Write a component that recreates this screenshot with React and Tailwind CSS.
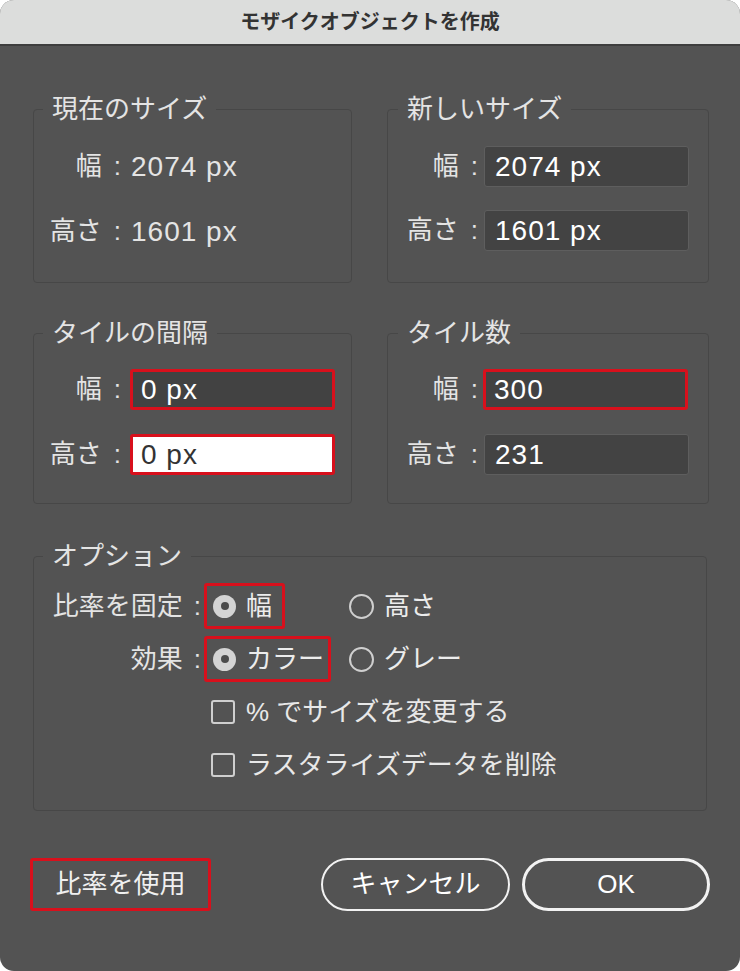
import React from "react";

const FONT = { fontFamily: '"Liberation Sans", "Noto Sans CJK JP", sans-serif' };

function Field({ value, red, white }) {
  const base = "flex items-center h-[41px] rounded-[3px] text-[28px] leading-none tracking-[1px] w-[205px]";
  const cls = red
    ? white
      ? "border-[3px] border-[#d8101c] bg-white text-[#333333] pl-[8px]"
      : "border-[3px] border-[#d8101c] bg-[#424242] text-white pl-[8px]"
    : "border border-[#5e5e5e] bg-[#434343] text-white pl-[10px]";
  return <div className={`${base} ${cls}`}>{value}</div>;
}

function Group({ title, children, className = "" }) {
  return (
    <fieldset className={`border border-[#474747] rounded-[4px] ${className}`}>
      <legend className="-ml-[10px] px-[9px] text-[26px] leading-[30px] text-[#e4e4e4]">{title}</legend>
      {children}
    </fieldset>
  );
}

function Row({ label, labelW, gap, children }) {
  return (
    <div className="flex items-center h-[41px]">
      <span className={`${labelW} flex justify-end items-center text-[26px] text-[#e4e4e4] whitespace-nowrap`}>
        <span>{label}</span>
        <span className="ml-[12px]">:</span>
      </span>
      <div className={gap}>{children}</div>
    </div>
  );
}

function Radio({ checked }) {
  return checked ? (
    <span className="flex items-center justify-center w-[23px] h-[23px] rounded-full bg-[#d4d4d4]">
      <span className="w-[8px] h-[8px] rounded-full bg-[#4c4c4c]" />
    </span>
  ) : (
    <span className="w-[25px] h-[25px] rounded-full border-2 border-[#cfcfcf]" />
  );
}

function Check({ label }) {
  return (
    <div className="flex items-center h-[46px] pl-[158px]">
      <span className="w-[24px] h-[24px] rounded-[3px] border-2 border-[#cfcfcf]" />
      <span className="ml-[11px] text-[26px] text-[#e8e8e8]">{label}</span>
    </div>
  );
}

function OptLabel({ text }) {
  return (
    <span className="w-[148px] flex justify-end items-center text-[26px] text-[#e4e4e4] whitespace-nowrap">
      <span>{text}</span>
      <span className="ml-[11px]">:</span>
    </span>
  );
}

export default function App() {
  return (
    <div className="w-[740px] h-[971px] bg-white" style={FONT}>
      <div className="w-[740px] h-[971px] rounded-[14px] overflow-hidden bg-[#535353] flex flex-col">
        <div className="h-[46px] shrink-0 bg-[#dcdddc] border-b-2 border-[#3e3e3e] flex items-center justify-center">
          <span className="text-[20px] font-bold text-[#333333]">モザイクオブジェクトを作成</span>
        </div>

        <div className="px-[33px] pt-[48px]">
          <div className="grid grid-cols-[319px_322px] gap-x-[35px]">
            <Group title="現在のサイズ" className="pl-[19px] pt-[22px] pb-[30px]">
              <div className="flex flex-col gap-[24px] text-[#e4e4e4]">
                <Row label="幅" labelW="w-[68px]" gap="ml-[10px]">
                  <span className="text-[28px] tracking-[1px]">2074 px</span>
                </Row>
                <Row label="高さ" labelW="w-[68px]" gap="ml-[10px]">
                  <span className="text-[28px] tracking-[1px]">1601 px</span>
                </Row>
              </div>
            </Group>
            <Group title="新しいサイズ" className="pl-[20px] pt-[22px] pb-[30px]">
              <div className="flex flex-col gap-[23px]">
                <Row label="幅" labelW="w-[70px]" gap="ml-[6px]"><Field value="2074 px" /></Row>
                <Row label="高さ" labelW="w-[70px]" gap="ml-[6px]"><Field value="1601 px" /></Row>
              </div>
            </Group>
          </div>

          <div className="grid grid-cols-[319px_322px] gap-x-[35px] mt-[35px]">
            <Group title="タイルの間隔" className="pl-[19px] pt-[21px] pb-[28px]">
              <div className="flex flex-col gap-[24px]">
                <Row label="幅" labelW="w-[68px]" gap="ml-[9px]"><Field value="0 px" red /></Row>
                <Row label="高さ" labelW="w-[68px]" gap="ml-[9px]"><Field value="0 px" red white /></Row>
              </div>
            </Group>
            <Group title="タイル数" className="pl-[20px] pt-[21px] pb-[28px]">
              <div className="flex flex-col gap-[24px]">
                <Row label="幅" labelW="w-[70px]" gap="ml-[5px]"><Field value="300" red /></Row>
                <Row label="高さ" labelW="w-[70px]" gap="ml-[6px]"><Field value="231" /></Row>
              </div>
            </Group>
          </div>

          <Group title="オプション" className="mt-[37px] pl-[19px] pt-[12px] pb-[22px]">
            <div className="flex flex-col gap-[7px]">
              <div className="flex items-center h-[46px]">
                <OptLabel text="比率を固定" />
                <div className="ml-[3px] w-[145px]">
                  <div className="inline-flex items-center h-[46px] border-[3px] border-[#d8101c] rounded-[3px] pl-[6px] pr-[10px]">
                    <Radio checked />
                    <span className="ml-[10px] text-[26px] text-[#ececec]">幅</span>
                  </div>
                </div>
                <div className="flex items-center">
                  <Radio />
                  <span className="ml-[10px] text-[26px] text-[#ececec]">高さ</span>
                </div>
              </div>
              <div className="flex items-center h-[46px]">
                <OptLabel text="効果" />
                <div className="ml-[3px] w-[145px]">
                  <div className="inline-flex items-center h-[46px] border-[3px] border-[#d8101c] rounded-[3px] pl-[6px] pr-[4px]">
                    <Radio checked />
                    <span className="ml-[10px] text-[26px] text-[#ececec]">カラー</span>
                  </div>
                </div>
                <div className="flex items-center">
                  <Radio />
                  <span className="ml-[10px] text-[26px] text-[#ececec]">グレー</span>
                </div>
              </div>
              <Check label="% でサイズを変更する" />
              <Check label="ラスタライズデータを削除" />
            </div>
          </Group>
        </div>

        <div className="flex items-center px-[30px] mt-[47px]">
          <div className="w-[181px] h-[53px] border-[3px] border-[#d8101c] rounded-[3px] flex items-center justify-center text-[26px] text-[#f0f0f0]">
            比率を使用
          </div>
          <div className="ml-auto flex gap-[12px]">
            <div className="w-[189px] h-[53px] rounded-full border-2 border-[#f2f2f2] flex items-center justify-center text-[26px] text-white">
              キャンセル
            </div>
            <div className="w-[188px] h-[53px] rounded-full border-[3px] border-[#f2f2f2] flex items-center justify-center text-[26px] text-white">
              OK
            </div>
          </div>
        </div>
      </div>
    </div>
  );
}
